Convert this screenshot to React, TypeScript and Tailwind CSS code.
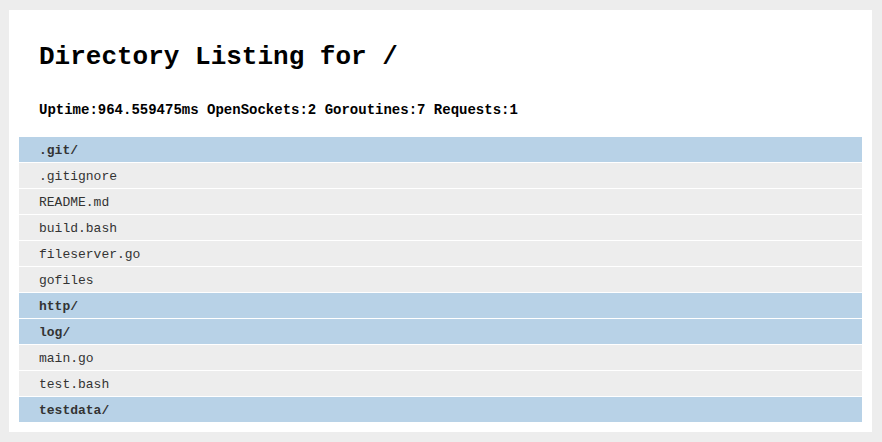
import React from 'react';

type Entry = { name: string; dir: boolean };

const entries: Entry[] = [
  { name: '.git/', dir: true },
  { name: '.gitignore', dir: false },
  { name: 'README.md', dir: false },
  { name: 'build.bash', dir: false },
  { name: 'fileserver.go', dir: false },
  { name: 'gofiles', dir: false },
  { name: 'http/', dir: true },
  { name: 'log/', dir: true },
  { name: 'main.go', dir: false },
  { name: 'test.bash', dir: false },
  { name: 'testdata/', dir: true },
];

const App: React.FC = () => {
  return (
    <div className="min-h-[442px] bg-[#ededed] pl-[9px] pr-[10px] pt-[10px] pb-[10px] font-['Courier_New','Liberation_Mono',monospace]">
      <div className="bg-white px-[10px] pt-[32px] pb-[10px]">
        <h1 className="pl-[20px] text-[26px] leading-[30px] font-bold text-black">Directory Listing for /</h1>
        <h3 className="pl-[20px] mt-[28px] text-[14px] leading-[20px] font-bold text-black">
          Uptime:964.559475ms OpenSockets:2 Goroutines:7 Requests:1
        </h3>
        <div className="mt-[17px] flex flex-col gap-px">
          {entries.map(e => (
            <div
              key={e.name}
              className={`h-[25px] pl-[20px] pt-[2px] text-[13px] leading-[23px] text-[#333] ${e.dir ? 'bg-[#b8d2e7] font-bold' : 'bg-[#ededed]'}`}
            >
              {e.name}
            </div>
          ))}
        </div>
      </div>
    </div>
  );
};

export default App;
